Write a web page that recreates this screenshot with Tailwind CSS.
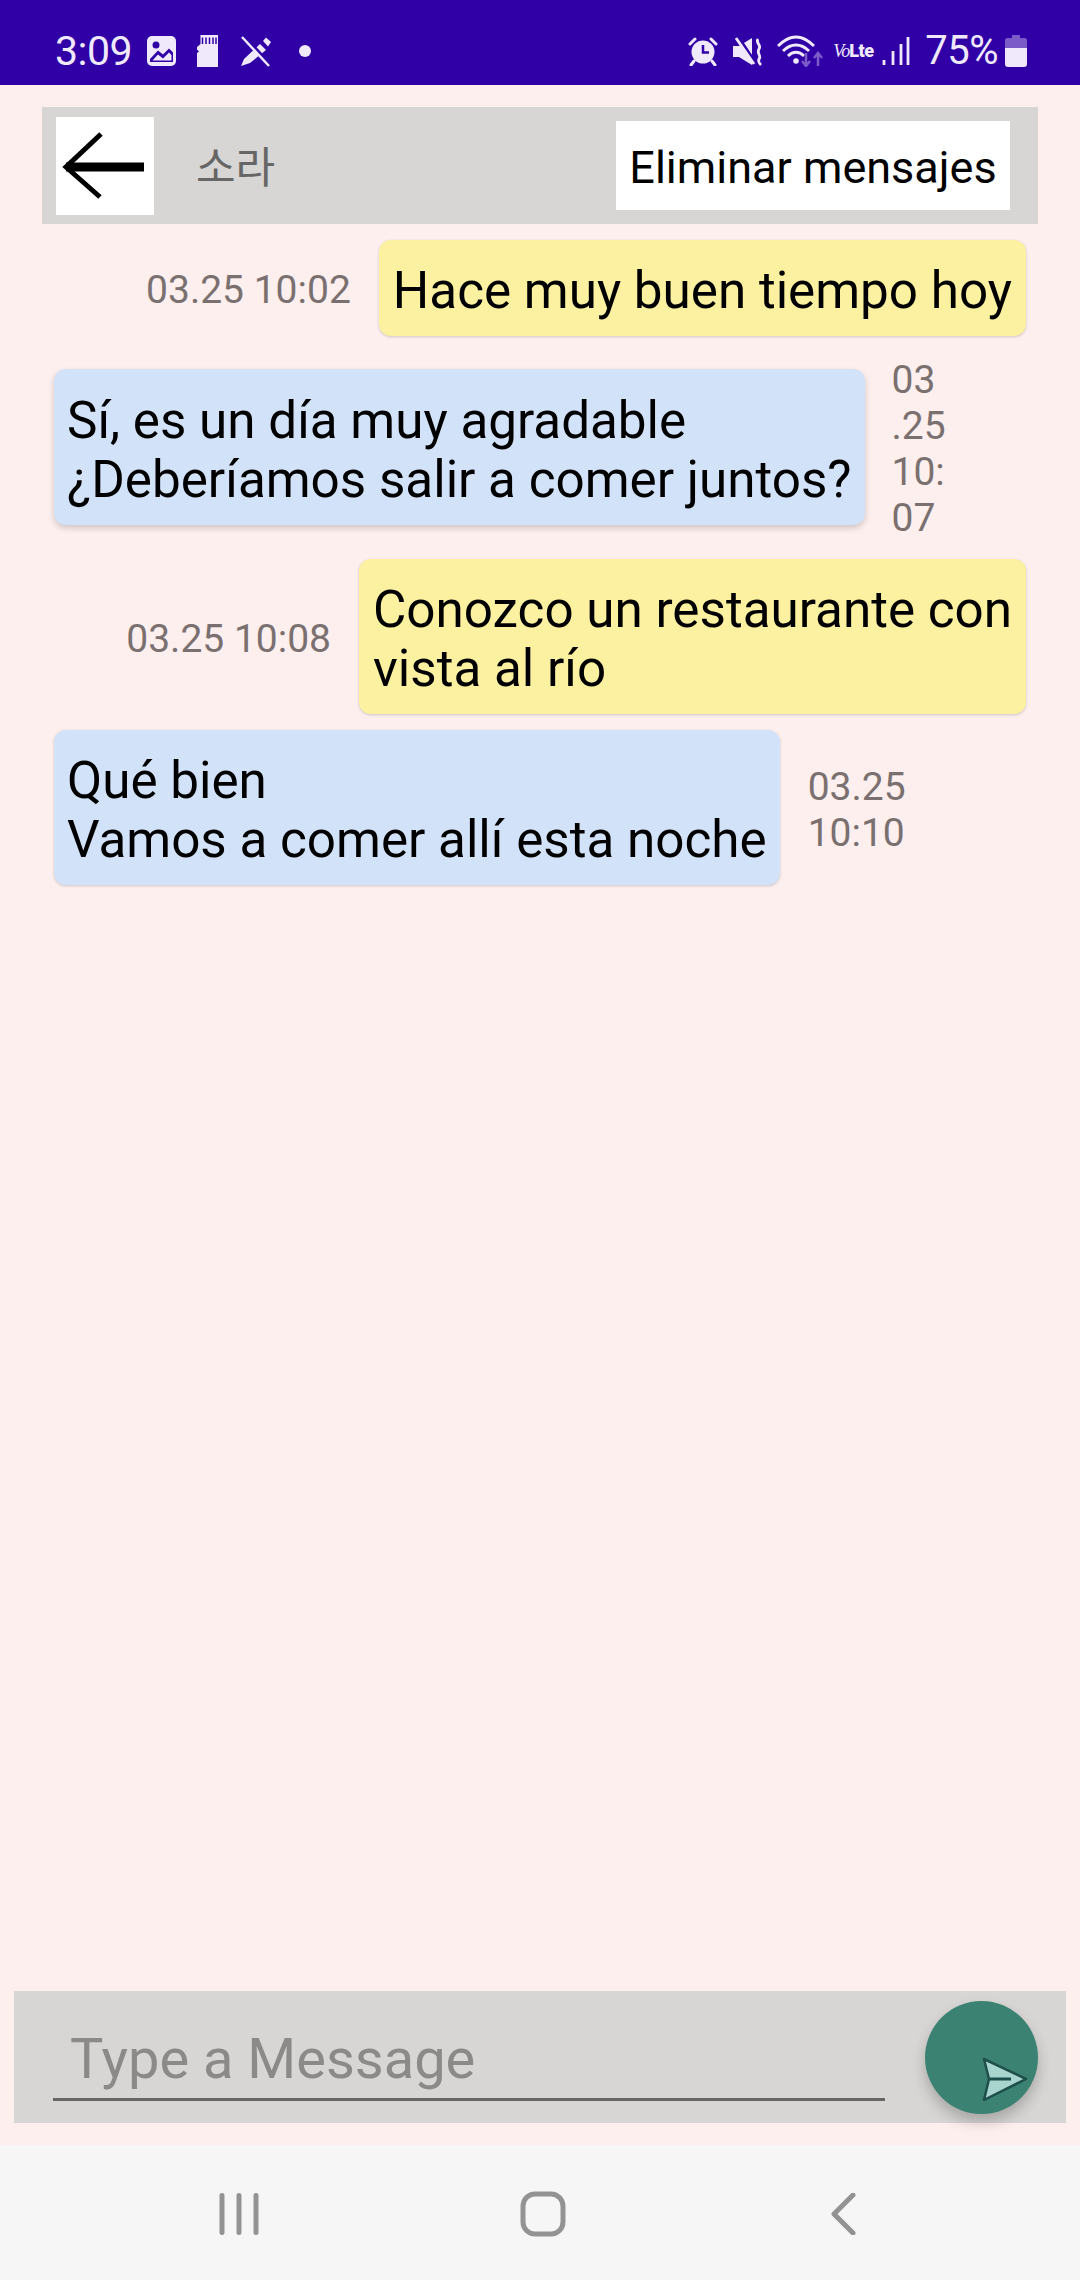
<!DOCTYPE html>
<html>
<head>
    <meta charset="utf-8" />
    <title>Chat</title>
    <script src="https://cdn.jsdelivr.net/npm/@tailwindcss/browser@4"></script>
</head>
<body class="bg-[#fdefee]" style='font-family: Roboto, "Noto Sans CJK KR", sans-serif;'>
    <div class="flex h-[2280px] w-[1080px] flex-col overflow-hidden">
        <!-- status bar -->
        <div class="flex h-[85px] shrink-0 items-center bg-[#3000a6] pl-[55px] pr-[53px] pt-[17px] text-[#efe9fb]">
            <span class="w-[73px] text-[41px] leading-none tracking-[-0.5px]">3:09</span>
            <svg class="ml-[19px]" width="29" height="30" viewBox="0 0 29 30">
                <rect width="29" height="30" rx="5" fill="#efe9fb" />
                <path d="M3 26V23L11 14.500L16 18.500L22 12.500L26 16.500V26Z" fill="#3000a6" />
                <path d="M5.500 24.500L11 18.500L16 22.500L22 16.500L24.500 19V24.500Z" fill="#efe9fb" />
                <circle cx="9" cy="9" r="3.500" fill="#3000a6" />
            </svg>
            <svg class="ml-[21px]" width="21" height="32" viewBox="0 0 21 32">
                <path d="M3.500 0H21V32H0V18L2 16.500L0 14.500V12L3.500 9Z" fill="#efe9fb" />
                <path d="M5.500 2.500V9M9 2.500V9M12.500 2.500V9M16 2.500V9M19 2.500V9" stroke="#3000a6" stroke-width="1.500" />
            </svg>
            <svg class="ml-[22px]" width="32" height="32" viewBox="0 0 32 32">
                <path d="M1 31L4 24L20 9L26 15L10 28Z" fill="#efe9fb" />
                <path d="M23 6L26 2.500L31 7L28 11.500Z" fill="#efe9fb" />
                <path d="M5 2L30 29" stroke="#3000a6" stroke-width="3" />
                <path d="M2 2L29 31" stroke="#efe9fb" stroke-width="2.500" />
            </svg>
            <span class="ml-[27px] h-[12px] w-[12px] rounded-full bg-[#efe9fb]"></span>
            <div class="flex-1"></div>
            <svg width="30" height="29" viewBox="0 0 30 29">
                <circle cx="15" cy="15" r="11.500" fill="#efe9fb" />
                <path d="M15 8V15.500H21" fill="none" stroke="#3000a6" stroke-width="2.500" />
                <path d="M2 7L7 2M23 2L28 7M6 24L3 28M24 24L27 28" stroke="#efe9fb" stroke-width="3" stroke-linecap="round" />
            </svg>
            <svg class="ml-[15px]" width="30" height="29" viewBox="0 0 30 29">
                <path d="M0 9H6L19 1V28L6 20H0Z" fill="#efe9fb" />
                <path d="M6 1L22 25" stroke="#3000a6" stroke-width="3" />
                <path d="M3 1L21 27" stroke="#efe9fb" stroke-width="2.800" />
                <path d="M25 2C22 6 29 8 26 12C23 16 29 19 26 22C25 24 26 26 28 28" fill="none" stroke="#efe9fb" stroke-width="2.800" />
            </svg>
            <svg class="ml-[14px]" width="46" height="32" viewBox="0 0 46 32">
                <path d="M1 11C13 -1 25 -1 37 11M6 16C14 8 24 8 32 16M11 21C16 16 22 16 27 21" fill="none" stroke="#efe9fb" stroke-width="2.800" />
                <circle cx="19" cy="26" r="2.800" fill="#efe9fb" />
                <path d="M29 18V30M25 26L29 31L33 26" fill="none" stroke="#7a5bc8" stroke-width="2.500" />
                <path d="M41 31V19M37 23L41 18L45 23" fill="none" stroke="#7a5bc8" stroke-width="2.500" />
            </svg>
            <span class="ml-[10px] flex w-[40px] items-baseline leading-none text-[#efe9fb]">
                <span class="text-[18px] italic tracking-[-1px]" style='font-family: "Liberation Serif", serif;'>Vo</span><span class="text-[18px] font-black tracking-[-0.5px]">Lte</span>
            </span>
            <svg class="ml-[9px]" width="28" height="29" viewBox="0 0 28 29">
                <path d="M2 23V28M11 14V28M19 7V28M26 0V28" stroke="#efe9fb" stroke-width="2.800" />
            </svg>
            <span class="ml-[15px] text-[40px] leading-none tracking-[-0.5px]">75%</span>
            <svg class="ml-[7px]" width="22" height="32" viewBox="0 0 22 32">
                <path d="M7 0H15V3H20C21 3 22 4 22 5V13H0V5C0 4 1 3 2 3H7Z" fill="#7a5bc8" />
                <path d="M0 13H22V29C22 31 21 32 19 32H3C1 32 0 31 0 29Z" fill="#efe9fb" />
            </svg>
        </div>

        <!-- main -->
        <main class="flex min-h-0 flex-1 flex-col">
            <div class="mx-[42px] mt-[22px] flex h-[117px] w-[996px] shrink-0 items-center bg-[#d7d6d4] pl-[14px] pr-[28px]">
                <div class="flex h-[98px] w-[98px] items-center justify-center bg-white">
                    <svg width="98" height="98" viewBox="0 0 98 98">
                        <path d="M10 50H88" stroke="#000" stroke-width="9" />
                        <path d="M45 17L10 50L44 80" fill="none" stroke="#000" stroke-width="5" />
                    </svg>
                </div>
                <span class="ml-[42px] pt-[6px] text-[43px] leading-none text-[#666666]">소라</span>
                <div class="flex-1"></div>
                <div class="flex h-[89px] w-[394px] items-center justify-center bg-white pt-[4px] text-[45px] text-black">Eliminar mensajes</div>
            </div>

            <div class="flex flex-col text-[51.2px] leading-[59px] text-black">
                <div class="mt-[16px] flex items-center justify-end pr-[54px]">
                    <span class="mr-[28px] translate-y-[2px] text-[39px] leading-[46px] text-[#7a7070]">03.25 10:02</span>
                    <div class="rounded-[12px] bg-[#fbf1a0] px-[14px] pb-[16px] pt-[21px] shadow-[0_1px_3px_rgba(0,0,0,0.18)]">Hace muy buen tiempo hoy</div>
                </div>
                <div class="mt-[19px] flex items-center pl-[54px]">
                    <div class="h-[156px] rounded-[12px] bg-[#d2e2f8] px-[13px] pb-[16px] pt-[22px] shadow-[0_3px_6px_rgba(0,0,0,0.18)]">Sí, es un día muy agradable<br />¿Deberíamos salir a comer juntos?</div>
                    <span class="ml-[27px] translate-y-[2px] text-[39px] leading-[46px] text-[#7a7070]">03<br />.25<br />10:<br />07</span>
                </div>
                <div class="mt-[20px] flex items-center justify-end pr-[54px]">
                    <span class="mr-[28px] translate-y-[2px] text-[39px] leading-[46px] text-[#7a7070]">03.25 10:08</span>
                    <div class="rounded-[12px] bg-[#fbf1a0] px-[14px] pb-[16px] pt-[21px] shadow-[0_1px_3px_rgba(0,0,0,0.18)]">Conozco un restaurante con<br />vista al río</div>
                </div>
                <div class="mt-[16px] flex items-center pl-[54px]">
                    <div class="rounded-[12px] bg-[#d2e2f8] px-[13px] pb-[16px] pt-[21px] shadow-[0_1px_3px_rgba(0,0,0,0.18)]">Qué bien<br />Vamos a comer allí esta noche</div>
                    <span class="ml-[28px] translate-y-[2px] text-[39px] leading-[46px] text-[#7a7070]">03.25<br />10:10</span>
                </div>
            </div>

            <div class="flex-1"></div>

            <!-- input bar -->
            <div class="mx-[14px] mb-[22px] flex h-[132px] w-[1052px] shrink-0 items-center bg-[#d7d6d4] pl-[39px] pr-[28px]">
                <div class="mb-[22px] flex h-[108px] w-[832px] items-end self-end border-b-[3px] border-[#666666] pb-[5px] pl-[17px] text-[56px] leading-[68px] text-[#8b8a89]">Type a Message</div>
                <div class="flex-1"></div>
                <div class="relative h-[113px] w-[113px] rounded-full bg-[#3b8272] shadow-[0_8px_14px_rgba(0,0,0,0.22)]">
                    <svg class="absolute left-[57px] top-[57px]" width="46" height="44" viewBox="0 0 46 44">
                        <path d="M2 1L44 21L2 42L7 21Z" fill="#a8d5ce" stroke="#1f4f4a" stroke-width="2.500" stroke-linejoin="round" />
                        <path d="M7 21H29" stroke="#1f4f4a" stroke-width="3" />
                    </svg>
                </div>
            </div>
        </main>

        <!-- nav bar -->
        <div class="relative flex h-[135px] shrink-0 items-start bg-[#f6f6f6]">
            <svg class="ml-[218px] mt-[48px]" width="42" height="42" viewBox="0 0 42 42">
                <path d="M4 2.500V39.500M21 2.500V39.500M38 2.500V39.500" fill="none" stroke="#939393" stroke-width="5" stroke-linecap="round" />
            </svg>
            <svg class="ml-[260px] mt-[46px]" width="46" height="46" viewBox="0 0 46 46">
                <rect x="3" y="3" width="40" height="40" rx="12" fill="none" stroke="#939393" stroke-width="5" />
            </svg>
            <svg class="ml-[264px] mt-[48px]" width="26" height="42" viewBox="0 0 26 42">
                <path d="M23 2L4 21L23 40" fill="none" stroke="#939393" stroke-width="5" stroke-linecap="round" stroke-linejoin="round" />
            </svg>
        </div>
    </div>
</body>
</html>
